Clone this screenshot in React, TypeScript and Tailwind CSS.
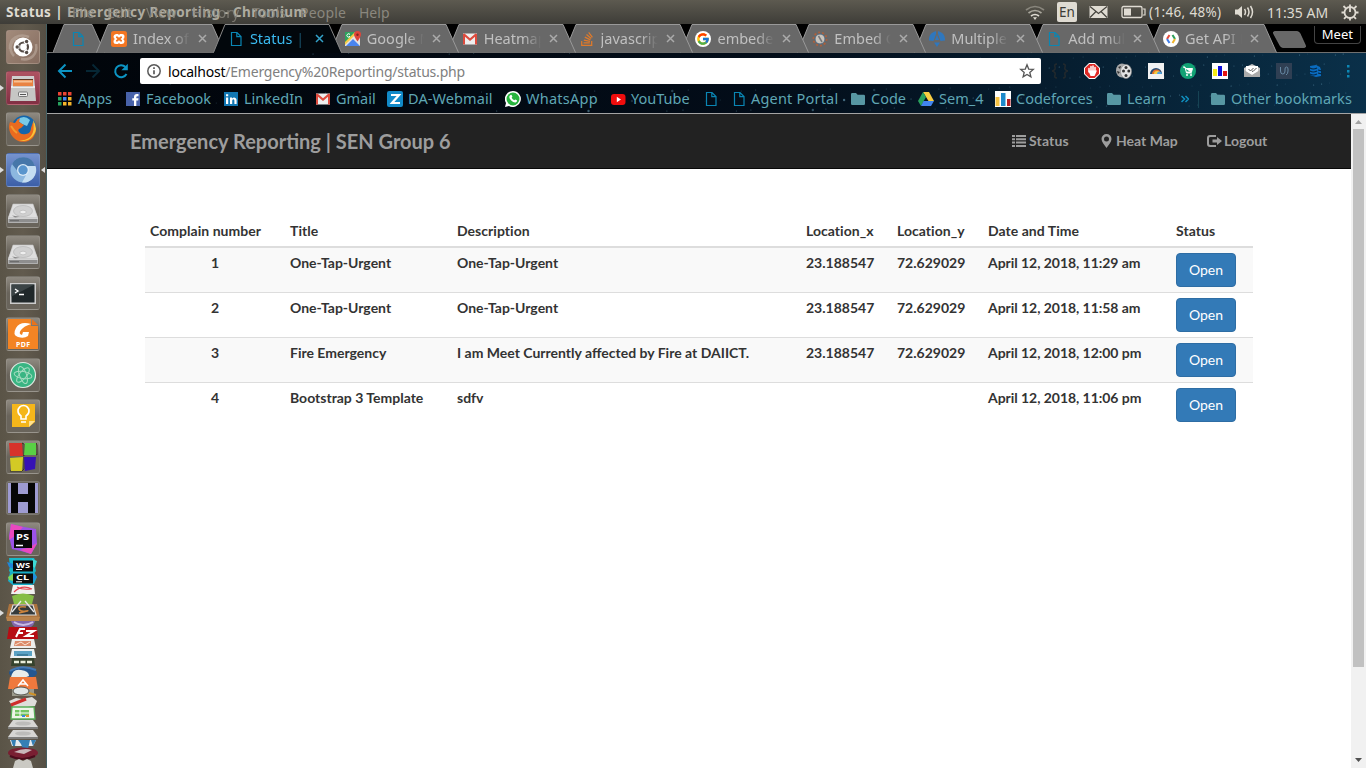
import type { ReactNode } from "react";
import { FaStackOverflow, FaWhatsapp } from "react-icons/fa";
import { FcGoogle } from "react-icons/fc";

/* ---------- small shared icons ---------- */

const Doc = () => (
  <svg className="h-4 w-4 shrink-0" viewBox="0 0 16 16" fill="none" stroke="#0a86b4" strokeWidth="1.200">
    <path d="M3.500 1.500h5.500l4 4v9H3.500zM8.800 1.500v4.200H13" />
  </svg>
);

const Folder = () => (
  <svg className="h-4 w-4 shrink-0" viewBox="0 0 16 16" fill="#5797a3">
    <path d="M1 3.200Q1 2 2.200 2H6l1.600 1.800h6.200q1.200 0 1.200 1.200v7.800q0 1.200-1.200 1.200H2.200Q1 14 1 12.800z" />
  </svg>
);

const Gmail = () => (
  <svg className="h-4 w-4 shrink-0" viewBox="0 0 16 16">
    <path d="M1 2.500h14v11H1z" fill="#eee" />
    <path d="M1 13.500V3l1.500-.5L8 7.300l5.500-4.800L15 3v10.500h-2V5.800L8 10 3 5.800v7.700z" fill="#dd4b3e" />
  </svg>
);

const Codeforces = () => (
  <svg className="h-4 w-4 shrink-0" viewBox="0 0 16 16">
    <path d="M0 0h16v16H0z" fill="#fff" />
    <path d="M0.500 6h4v9h-4z" fill="#f6c343" />
    <path d="M6 2h4.500v13H6z" fill="#1d8acb" />
    <path d="M12 8h3.500v7H12z" fill="#b21f24" />
  </svg>
);

/* ---------- system panel ---------- */

function Panel() {
  return (
    <header className="flex h-6 shrink-0 items-center bg-linear-to-b from-[#5d5a50] to-[#3e3d38] font-['Noto_Sans',sans-serif] text-[14px] text-[#dfdbd2]">
      <div className="relative flex h-6 w-[1025px] items-center pl-[6px]">
        <span className="w-[301px] whitespace-nowrap text-[13.500px] font-bold tracking-[0.420px]">
          Status | <span className="text-[#aeaba0]">Emergency Reporting - Chromium</span>
        </span>
        <div className="absolute left-[72px] top-0 flex h-6 items-center whitespace-nowrap text-[#8a877e]">
          <span className="w-[35px] opacity-80">File</span>
          <span className="w-[39px] opacity-80">Edit</span>
          <span className="w-[46px] opacity-80">View</span>
          <span className="w-[60px] opacity-80">History</span>
          <span className="w-[48px] opacity-80">Tools</span>
          <span className="w-[59px] tracking-[0.200px]">People</span>
          <span>Help</span>
        </div>
      </div>
      <svg className="mr-[12px] h-5 w-5 shrink-0" viewBox="0 0 20 20" fill="none" strokeWidth="1.700">
        <path d="M1 8q9-7 18 0" stroke="#89867d" />
        <path d="M3.500 11q6.500-5 13 0" stroke="#aaa79d" />
        <path d="M6 14q4-3 8 0" stroke="#dfdbd2" />
        <path d="M8 15.300h4L10 18z" fill="#dfdbd2" />
      </svg>
      <span className="flex h-5 w-5 shrink-0 items-center justify-center rounded-[2px] bg-[#dfdbd2] text-[13.500px] text-[#3c3b37]">En</span>
      <svg className="ml-[12px] h-[14px] w-[19px] shrink-0" viewBox="0 0 19 14">
        <path d="M.5 1h18v12H.5z" fill="#dfdbd2" />
        <path d="M1 1.500l8.500 7 8.500-7M1 12.500l6-6m11 6l-6-6" fill="none" stroke="#45433d" strokeWidth="1.200" />
      </svg>
      <svg className="ml-[13px] h-[14px] w-[25px] shrink-0" viewBox="0 0 25 14">
        <rect x="1" y="1.500" width="20" height="11" rx="1.500" fill="none" stroke="#dfdbd2" strokeWidth="1.300" />
        <path d="M3 3.500h7v7H3z" fill="#dfdbd2" />
        <path d="M22 4h2v6h-2" fill="none" stroke="#dfdbd2" strokeWidth="1.200" />
      </svg>
      <span className="ml-[3px] w-[82px] whitespace-nowrap text-[13.500px] tracking-[0.350px]">(1:46, 48%)</span>
      <svg className="ml-[3px] h-4 w-5 shrink-0" viewBox="0 0 20 16" fill="none" stroke="#dfdbd2" strokeWidth="1.500">
        <path d="M1 5.500h3l4-3.500v12l-4-3.500H1z" fill="#dfdbd2" stroke="none" />
        <path d="M10.500 5q2 3 0 6M13.500 3.500q3 4.500 0 9M16.500 2q4 6 0 12" />
      </svg>
      <span className="ml-[13px] w-[74px] whitespace-nowrap text-[14px] tracking-[0.020px]">11:35 AM</span>
      <svg className="h-[18px] w-[18px] shrink-0" viewBox="0 0 18 18" fill="none" stroke="#dfdbd2" strokeWidth="1.800">
        <circle cx="9" cy="9.500" r="5.500" />
        <path d="M9 0v3" stroke="#55524a" strokeWidth="5" />
        <path d="M9 1.500V9M2.500 3l2.300 2.300M15.500 3l-2.300 2.300M.5 9.500H3.500M14.500 9.500h3M3 15.800l2-2M15 15.800l-2-2M9 15v2.500" />
      </svg>
    </header>
  );
}

/* ---------- launcher ---------- */

function Tile({ children, className, left, right }: { children: ReactNode; className?: string; left?: boolean; right?: boolean }) {
  return (
    <div
      className={
        "relative h-[34px] w-[34px] shrink-0 rounded-[3px] border border-white/10 " +
        (className ?? "bg-linear-to-b from-[#8f8a81] via-[#69645b] to-[#69645b]")
      }
    >
      <svg className="h-8 w-8" viewBox="0 0 32 32">
        {children}
      </svg>
      {left && (
        <svg className="absolute -left-[7px] top-[13px] h-[6px] w-[4px]" viewBox="0 0 4 6">
          <path d="M0 0l4 3-4 3z" fill="#ddd" />
        </svg>
      )}
      {right && (
        <svg className="absolute -right-[6px] top-[13px] h-[6px] w-[4px]" viewBox="0 0 4 6">
          <path d="M4 0L0 3l4 3z" fill="#ddd" />
        </svg>
      )}
    </div>
  );
}

const Drive = () => (
  <g>
    <path d="M6 10h20l5 13v4q0 1-1 1H2q-1 0-1-1v-4z" fill="#d2d2d2" />
    <path d="M1.500 24h29v3.500h-29z" fill="#8e8e8e" />
    <path d="M6 9h20l4.500 13.500h-29z" fill="#dedede" stroke="#c5c5c5" strokeWidth=".6" />
    <ellipse cx="16" cy="16" rx="9.500" ry="5.500" fill="#d0d0d0" stroke="#b5b5b5" strokeWidth=".7" />
    <ellipse cx="16" cy="17" rx="3.200" ry="1.800" fill="#eee" stroke="#aaa" strokeWidth=".5" />
    <path d="M5 20.500l8 1.200-5 .7z" fill="#888" />
    <path d="M3 25.700h9" stroke="#666" />
  </g>
);

function StackedApps() {
  return (
    <svg className="h-[210px] w-[36px] shrink-0" viewBox="0 0 36 210">
      <path d="M4 0h25l2 4-1 5 1 4-3 4H8l-4-4 1-5z" fill="#18b8c8" />
      <path d="M2 4l7 2v5l-5-2z" fill="#2086d8" />
      <path d="M27 1l5 2-2 7-3-2z" fill="#3ddbd5" />
      <path d="M5 14h24l3 5-3 7-5 2H9l-6-5z" fill="#18adc8" />
      <path d="M3 19l6-4v8l-5-1z" fill="#7ed65a" />
      <path d="M27 15l5 4-5 5z" fill="#238be0" />
      <path d="M8 2.500h20v11H8zM8 15.500h20v10H8z" fill="#0b0b0b" />
      <text x="11" y="9.500" textLength="14" lengthAdjust="spacingAndGlyphs" fontSize="7" fontWeight="700" fontFamily="Noto Sans" fill="#fff">WS</text>
      <text x="11" y="21.500" textLength="13" lengthAdjust="spacingAndGlyphs" fontSize="7" fontWeight="700" fontFamily="Noto Sans" fill="#fff">CL</text>
      <path d="M11 11.500h6M11 23.800h6" stroke="#fff" />
      <path d="M8 27h21l1 9H6z" fill="#f0f0ee" />
      <path d="M9 34q8-8 18-3M12 29q5 3 14 2" fill="none" stroke="#e34450" strokeWidth="1.100" />
      <path d="M7 38q11-5 22 0l-2 8H9z" fill="#85bd45" />
      <path d="M4 46h28l3 14H1z" fill="#ac743e" />
      <path d="M8 47h20l3 10H5z" fill="#353a3b" stroke="#dedede" strokeWidth="1.200" />
      <path d="M16 43l-9 11M20 43l9 11" fill="none" stroke="#e8e8e8" strokeWidth="1.300" />
      <path d="M21 49q-8-1-7 2t7 2-7 2" fill="none" stroke="#cc843c" strokeWidth="1.500" />
      <path d="M1 59h34l-1 4H2z" fill="#b9834c" />
      <path d="M6 63h24q-2 8-12 8T6 63z" fill="#8166ac" />
      <path d="M9 64q9 6 19 0" fill="none" stroke="#c9bbe4" strokeWidth="2" />
      <path d="M4 69h28l1 12H2z" fill="#b70d14" />
      <path d="M11 79l4-8h5M12 75h6M21 73h8l-8 5h8" fill="none" stroke="#fff" strokeWidth="2" />
      <path d="M7 81h22l2 9H5z" fill="#ededeb" />
      <path d="M10 83h16v5H9z" fill="#dc8b69" />
      <path d="M10 87l6-3 4 3 5-3" fill="none" stroke="#f9e4d4" />
      <path d="M7 91h22l2 9H5z" fill="#edf2f3" />
      <path d="M9 93h18v5H9z" fill="#5aa2c4" />
      <path d="M12 97h11" stroke="#245e78" />
      <path d="M7 100h22l1 8H6z" fill="#36432d" />
      <path d="M9 104h18" stroke="#e9edda" strokeWidth="2.500" strokeDasharray="5 1.500" />
      <ellipse cx="18" cy="115" rx="14" ry="5.500" fill="#245791" />
      <path d="M6 119q2-9 10-7 8 1 8 6l-8 3z" fill="#e8ecec" />
      <path d="M5 113q12-7 26-1" fill="none" stroke="#4379b5" strokeWidth="2" />
      <path d="M5 119h26l2 12H3z" fill="#ef793d" />
      <path d="M13 128l5-6 5 6M15 126h6" fill="none" stroke="#fff" strokeWidth="1.500" />
      <path d="M7 131h22v7H7z" fill="#9b9a8b" />
      <ellipse cx="16" cy="133" rx="8" ry="4" fill="#e1e7e6" stroke="#55544c" />
      <path d="M24 135l7 2" stroke="#cf9229" strokeWidth="2" />
      <path d="M4 143l7-3 6 1 10-2 5 4-2 5-7 1H8z" fill="#dededa" />
      <path d="M6 147l15-6" stroke="#cf2d2c" strokeWidth="3" />
      <path d="M7 149h22l1 12H6z" fill="#eef4e9" stroke="#58ae58" strokeWidth="1.300" />
      <path d="M10 152h14v6H10z" fill="#73c562" />
      <path d="M10 155h14M15 152v6" stroke="#fff" />
      <path d="M17 157h3v2h-3z" fill="#3a85dd" /><path d="M21 157h3v2h-3z" fill="#e5942b" />
      {[162, 172].map((y) => (
        <g key={y}>
          <path d={`M8 ${y}h20l5 7v2H3v-2z`} fill="#d6d6d4" />
          <path d={`M3 ${y + 7}h30v2H3z`} fill="#7d7d7b" />
          <ellipse cx="18" cy={y + 3.500} rx="8" ry="2" fill="#bcbcba" />
        </g>
      ))}
      <path d="M5 182h26l-3 6H7z" fill="#e6eaed" />
      <path d="M6 182h5l-1 6H8zM13 182h12l-2 9h-5l-2-5zM26 182h5l-3 6z" fill="#347fb4" />
      <ellipse cx="18" cy="195" rx="15" ry="5.500" fill="#791f32" />
      <path d="M9 194q10-5 18-2l-8 4z" fill="#c9b7ba" />
      <path d="M5 198q12 6 25 0" stroke="#4c0c1c" strokeWidth="2" fill="none" />
      <path d="M10 203l4-2 4 2 4-2 4 2 2 7H8z" fill="#cac9c3" />
    </svg>
  );
}

function Launcher() {
  return (
    <aside className="flex w-[47px] shrink-0 flex-col items-center gap-[7px] overflow-hidden border-r border-[#456064] bg-linear-to-r from-[#5a5447] via-[#625b4e] to-[#554f44] pr-px pt-[6px]">
      <Tile className="bg-linear-to-br from-[#a28b7b] to-[#866d60]">
        <path d="M3 18C2 7 12 2 22 6M29 13c2 10-5 17-15 15M7 25C0 18 5 8 11 6" fill="none" stroke="#b7a497" strokeWidth="2.500" opacity=".7" />
        <circle cx="16" cy="16" r="9.500" fill="#fff" />
        <circle cx="16.500" cy="16" r="4.500" fill="none" stroke="#534a45" strokeWidth="2.200" />
        <path d="M12.500 16H9M18.200 13L20.500 9M18.200 19L20.500 23" stroke="#fff" strokeWidth="3.600" />
        <circle cx="10.200" cy="16" r="1.700" fill="#534a45" />
        <circle cx="19.600" cy="10.500" r="1.700" fill="#534a45" />
        <circle cx="19.600" cy="21.500" r="1.700" fill="#534a45" />
      </Tile>
      <Tile left className="bg-linear-to-b from-[#ae5362] to-[#812f43]">
        <path d="M5 4h22l1 11H4z" fill="#cfcfcf" />
        <path d="M6 7h20v8H6z" fill="#5d3823" />
        <path d="M6 8h20v6H6z" fill="#e98342" />
        <path d="M7 9.500h18" stroke="#f7c092" strokeWidth="2" />
        <path d="M4 15h24l1 14H3z" fill="#c6c6c4" />
        <path d="M4 15h24" stroke="#f8f8f8" strokeWidth="1.500" />
        <rect x="11.500" y="20" width="9" height="4.500" rx="1" fill="#eee" stroke="#777" />
        <path d="M13 22.500h6" stroke="#555" />
      </Tile>
      <Tile>
        <circle cx="17" cy="14.500" r="12" fill="#1565aa" />
        <path d="M10 7q7-6 13 0l-3 6-5-2z" fill="#79cae8" />
        <path d="M3 9l5 1q2-4 5-5l-1 4 5 3-3 3q-4 1-2 4t7 2c3 0 5-3 5-6l2-6q5 8 1 14c-3 6-13 8-19 3S1 14 3 9z" fill="#ea6b1f" />
        <path d="M26 7q6 9 0 16t-14 4q8 1 12-4t2-16z" fill="#f9c338" />
        <path d="M4 13q3 5 6 7" stroke="#f49b2f" strokeWidth="2" fill="none" />
      </Tile>
      <Tile left right className="bg-linear-to-b from-[#7693ce] to-[#3c5fa8]">
        <circle cx="16" cy="16" r="12.500" fill="#8cb7df" />
        <path d="M5 10A12.500 12.500 0 0 1 28 12H16l-4 7z" fill="#4777a9" />
        <path d="M28.500 12A12.500 12.500 0 0 1 15 28.500l5.500-10L20 12z" fill="#c5def2" />
        <circle cx="16" cy="16" r="6" fill="#dbeaf7" />
        <circle cx="16" cy="16" r="4.700" fill="#5995cd" />
      </Tile>
      <Tile><Drive /></Tile>
      <Tile><Drive /></Tile>
      <Tile>
        <path d="M3 6h26v21H3z" fill="#ccc" />
        <path d="M4.500 7.500h23v18h-23z" fill="#20282a" />
        <path d="M4.500 7.500h23l-23 12z" fill="#3b4446" />
        <path d="M8 12l3 2-3 2M12 17.500h5" stroke="#fff" fill="none" strokeWidth="1.300" />
      </Tile>
      <Tile>
        <path d="M1 1h23v7h7v23H1z" fill="#f38424" />
        <path d="M25 1l6 6h-6z" fill="#e9721b" />
        <path d="M24 6q-11-3-15 4t2 9 10-1l1-4h-6l-1 3q-4-1-1-5t10-6z" fill="#fff" />
        <text x="9" y="29" textLength="14" fontSize="7" fontWeight="700" fontFamily="Noto Sans" fill="#fff">PDF</text>
      </Tile>
      <Tile>
        <circle cx="16" cy="16" r="12.500" fill="#39b583" stroke="#dfeae3" strokeWidth="1.200" />
        <g fill="none" stroke="#a5dcc0" strokeWidth="1">
          <ellipse cx="16" cy="16" rx="3.500" ry="9" transform="rotate(-20 16 16)" />
          <ellipse cx="16" cy="16" rx="3.500" ry="9" transform="rotate(40 16 16)" />
          <ellipse cx="16" cy="16" rx="3.500" ry="9" transform="rotate(100 16 16)" />
        </g>
      </Tile>
      <Tile>
        <path d="M5 4h23v18l-6 5H5z" fill="#f4b61b" />
        <path d="M28 21l-6 6v-6z" fill="#ffe190" />
        <path d="M14 19v-3q-3-2-3-5a5.500 5.500 0 0 1 11 0q0 3-3 5v3zM14 22h5" fill="none" stroke="#fff" strokeWidth="1.600" />
      </Tile>
      <Tile>
        <path d="M15 2l2 1v12l-2-1zM29 2l1 2v10l-2-1zM3 30h12l2-2v-12" fill="none" stroke="#38351c" />
        <path d="M2 2h13l1 13H3z" fill="#d7322b" />
        <path d="M18 2h11v12H17z" fill="#59cf45" />
        <path d="M3 17l13-1-1 14H4z" fill="#d3ca25" />
        <path d="M17 16h12l-1 12-10 2z" fill="#3612b5" />
      </Tile>
      <Tile className="bg-[#6d6962]">
        <path d="M1 1h30v30H1z" fill="#9e9bd1" />
        <path d="M4 1h7v11h10V1h7v30h-7V20H11v11H4z" fill="#070707" />
      </Tile>
      <Tile>
        <path d="M4 1l13 3 12 2 1 15-6 10-10-3-9-2L2 13z" fill="#9c52e8" />
        <path d="M4 1l12 3-8 9-6 4zM23 24l7-4-6 11-11-4z" fill="#ea49bd" />
        <path d="M7 7h18v18H7z" fill="#080808" />
        <text x="9" y="16.500" fontSize="9.500" textLength="13" lengthAdjust="spacingAndGlyphs" fontWeight="700" fontFamily="Noto Sans" fill="#fff">PS</text>
        <path d="M9 22.500h7" stroke="#fff" strokeWidth="1.500" />
      </Tile>
      <div className="relative -mt-[5px] flex">
        <StackedApps />
        <svg className="absolute -left-[5px] top-[52px] h-[6px] w-[4px]" viewBox="0 0 4 6">
          <path d="M0 0l4 3-4 3z" fill="#ddd" />
        </svg>
      </div>
    </aside>
  );
}

/* ---------- tab strip ---------- */

const tabs: { title: string; active?: boolean; icon: ReactNode }[] = [
  {
    title: "Index of /",
    icon: (
      <svg className="h-4 w-4" viewBox="0 0 16 16">
        <rect width="16" height="16" rx="2.500" fill="#f37623" />
        <path d="M5 3h2l1 1 1-1h2q2.500 0 2.500 2.500T12 8q1.500.5 1.500 2.500T11 13H9l-1-1-1 1H5q-2.500 0-2.500-2.500T4 8Q2.500 7.500 2.500 5.500T5 3z" fill="#fff" />
        <path d="M5 5.500h1.500l1.500 1.300 1.500-1.300H11v1.200L9.500 8l1.500 1.300v1.200H9.500L8 9.200l-1.500 1.300H5V9.300L6.500 8 5 6.700z" fill="#f37623" />
      </svg>
    ),
  },
  { title: "Status | Emergency", active: true, icon: <Doc /> },
  {
    title: "Google Maps",
    icon: (
      <svg className="h-4 w-4" viewBox="0 0 16 16">
        <path d="M0 1h15v14H0z" fill="#e4e4e4" />
        <path d="M0 1h11L0 12z" fill="#2da35e" />
        <path d="M1 15l7-7 7 7z" fill="#4a85ef" />
        <path d="M0 11L10 1h3L0 14z" fill="#f7cc46" />
        <path d="M12.500 0a3.500 3.500 0 0 1 3.500 3.500q0 2-3.500 7Q9 5.500 9 3.500A3.500 3.500 0 0 1 12.500 0z" fill="#df453a" />
        <circle cx="12.500" cy="3.700" r="1.200" fill="#7d2a22" />
        <path d="M5 3.500a1.700 1.700 0 1 0 0 2H3.800" fill="none" stroke="#fff" />
      </svg>
    ),
  },
  { title: "Heatmap.js", icon: <Gmail /> },
  { title: "javascript - Go", icon: <FaStackOverflow className="h-4 w-4 text-[#e07a2a]" /> },
  {
    title: "embeded map",
    icon: (
      <span className="flex h-4 w-4 items-center justify-center rounded-full bg-white">
        <FcGoogle className="h-3.5 w-3.5" />
      </span>
    ),
  },
  {
    title: "Embed Google",
    icon: (
      <svg className="h-4 w-4" viewBox="0 0 16 16">
        <circle cx="8" cy="8" r="6.500" fill="none" stroke="#a9603e" strokeWidth="2" strokeDasharray="2 2" />
        <circle cx="8" cy="8" r="5" fill="#c9c4bd" stroke="#526b82" />
        <path d="M6.500 5l3.500 6" stroke="#777" strokeWidth="1.500" />
      </svg>
    ),
  },
  {
    title: "Multiple markers",
    icon: (
      <svg className="h-4 w-4" viewBox="0 0 16 16" fill="#2f77bd">
        <path d="M7 0v3L4.500 10 0 9.500Q-.5 2 7 0zM9 0v3l2.500 7 4.500-.5Q16.500 2 9 0z" />
        <path d="M8 4l2 5H6zM5 11.500h6L8 16z" />
      </svg>
    ),
  },
  { title: "Add multiple", icon: <Doc /> },
  {
    title: "Get API Key",
    icon: (
      <svg className="h-4 w-4" viewBox="0 0 16 16" fill="none" strokeWidth="2">
        <circle cx="8" cy="8" r="8" fill="#fff" />
        <path d="M6.500 4L4 8" stroke="#e34b3c" />
        <path d="M4 8l2.500 4" stroke="#3f7de8" />
        <path d="M9.500 4L12 8" stroke="#2b9e5a" />
        <path d="M12 8l-2.500 4" stroke="#f1b52b" />
      </svg>
    ),
  },
];

const tabLayers = ["z-20", "z-30", "z-[18]", "z-[17]", "z-[16]", "z-[15]", "z-[14]", "z-[13]", "z-[12]", "z-[11]"];

function TabStrip() {
  return (
    <div className="flex h-[29px] shrink-0 border-b border-[#707070] bg-black pl-[6px]">
      <div className="relative z-20 flex w-[43px] shrink-0">
        <svg className="absolute left-0 top-0 h-[29px] w-[52px]" viewBox="0 0 52 29">
          <path d="M0 28.500L11 .5h28L51.500 28.500" fill="#686868" stroke="#949494" />
        </svg>
        <span className="relative ml-[17px] mt-[7px]"><Doc /></span>
      </div>
      {tabs.map((tab, i) => (
        <div key={tab.title} className={"relative flex h-[29px] w-[116.900px] shrink-0 " + tabLayers[i]}>
          <svg className="absolute left-0 top-0 h-[29px] w-[129px]" viewBox="0 0 129 29">
            <path
              d="M.5 28.500L12 .5h104L128.500 28.500"
              fill={tab.active ? "#02070c" : "#686868"}
              stroke={tab.active ? "#888" : "#999"}
            />
            {tab.active && <path d="M1 28.500h127" stroke="#02070c" />}
          </svg>
          <div className="relative flex h-[29px] items-center pl-[15px]">
            <span className="flex h-4 w-4 shrink-0">{tab.icon}</span>
            <span
              className={
                "ml-[6px] w-[57px] overflow-hidden whitespace-nowrap mask-r-from-70% font-['Noto_Sans',sans-serif] text-[14.500px] " +
                (tab.active ? "text-[#3ab9ef]" : "text-[#c0c0c0]")
              }
            >
              {tab.title}
            </span>
            <svg className="ml-[8px] h-[9px] w-[9px]" viewBox="0 0 9 9" stroke={tab.active ? "#34a2ca" : "#aaa"} strokeWidth="1.500">
              <path d="M1 1l7 7M8 1L1 8" />
            </svg>
          </div>
        </div>
      ))}
      <svg className="ml-[7px] mt-[7px] h-[17px] w-[36px] shrink-0" viewBox="0 0 36 17">
        <path d="M2.500.5H25q2 0 3 2l5.500 12q.5 2-1 2H11q-2 0-3-2L1.500 2.500Q1 .5 2.500.5z" fill="#686868" stroke="#888" strokeWidth=".6" />
      </svg>
      <span className="ml-[6px] mt-[2px] flex h-[18px] w-[47px] items-center justify-center rounded-b-[4px] border border-t-0 border-[#444] pt-px font-['Noto_Sans',sans-serif] text-[13px] text-white">
        Meet
      </span>
    </div>
  );
}

/* ---------- toolbar and bookmarks ---------- */

const extensions: ReactNode[] = [
  <path d="M5 1Q2 1 3 4t-3 4q4 1 3 4t2 3M11 1q3 0 2 3t3 4q-4 1-3 4t-2 3" fill="none" stroke="#22292d" strokeWidth="1.500" />,
  <g>
    <path d="M5 0h6l5 5v6l-5 5H5l-5-5V5z" fill="#fff" />
    <path d="M5.300 1h5.400L15 5.300v5.400L10.700 15H5.300L1 10.700V5.300z" fill="#df2824" />
    <path d="M5 9V5.500M7 8V3.500M9 8V3M11 8V4.500" stroke="#fff" strokeWidth="1.500" strokeLinecap="round" />
    <path d="M4.300 7.500h7.500L13 7.500 10.500 13H6.500z" fill="#fff" />
  </g>,
  <g>
    <ellipse cx="6" cy="7.500" rx="6" ry="7" fill="#aaa" />
    <ellipse cx="10" cy="8.500" rx="5.500" ry="7" fill="#e4e4e4" stroke="#888" strokeWidth=".7" />
    <g fill="#333">
      <circle cx="10" cy="4.500" r="1.500" />
      <circle cx="7.500" cy="8" r="1.500" />
      <circle cx="12.800" cy="8" r="1.500" />
      <circle cx="10" cy="12.500" r="1.500" />
      <path d="M2 4l3-1-1 3zM1 8l3 1-2 2z" />
    </g>
  </g>,
  <g>
    <path d="M0 0h16v16H0z" fill="#f2f2f2" />
    <path d="M2 11a6 6 0 0 1 12 0" fill="#264b76" />
    <path d="M4 11a4.500 4.500 0 0 1 9 0" fill="#e7742a" />
    <path d="M6 11a3 3 0 0 1 6 0" fill="#f6cd42" />
    <path d="M9 11a2 2 0 0 1 5 0" fill="#51a5df" />
  </g>,
  <g>
    <circle cx="8" cy="8" r="8" fill="#12a275" />
    <path d="M3 4h2l1.500 6H12M5.500 5.500h7L11.500 9h-5" fill="#fff" stroke="#fff" />
    <circle cx="7" cy="12" r="1" fill="#fff" />
    <circle cx="11" cy="12" r="1" fill="#fff" />
  </g>,
  <g>
    <path d="M0 0h16v16H0z" fill="#fff" />
    <path d="M1 6h4v7H1z" fill="#f6ec16" />
    <path d="M6 3h4v10H6z" fill="#0b0cd8" />
    <path d="M11 8h4v5h-4z" fill="#e51414" />
  </g>,
  <g>
    <path d="M0 5l8-4 8 4v9H0z" fill="#c7c7c7" />
    <path d="M2 3h12v6l-6 3-6-3z" fill="#fff" />
    <path d="M0 7l8 5 8-5v7H0z" fill="#ababab" />
    <path d="M4.500 6l2 2 3-3M8 8l1 .5 3.500-3.500" fill="none" stroke="#555" />
  </g>,
  <g>
    <path d="M0 0h16v16H0z" fill="#2f3f53" />
    <path d="M4.500 4v4q0 3 2.300 3T9 8V6q0-2 1.500-2T12 6v2q0 3-2 4" fill="none" stroke="#6688a3" />
  </g>,
  <g>
    <path d="M2 3l6-1 4 2 1 3v6l-5 1-6-2z" fill="#0a6cc0" />
    <path d="M2 5q3 2 7 0M2 8q3 2 7 0M2 11q3 2 7 0M10 7l4 1M10 10l4 1" fill="none" stroke="#042643" strokeWidth="1.200" />
  </g>,
];

function Toolbar() {
  return (
    <div className="flex h-[36px] shrink-0 items-center pl-[10px]">
      <svg className="h-4 w-4" viewBox="0 0 16 16" fill="none" stroke="#0c94c3" strokeWidth="2">
        <path d="M15 8H2M8.500 1.500L2 8l6.500 6.500" />
      </svg>
      <svg className="ml-[12px] h-4 w-4" viewBox="0 0 16 16" fill="none" stroke="#062735" strokeWidth="2">
        <path d="M1 8h13M7.500 1.500L14 8l-6.500 6.500" />
      </svg>
      <svg className="ml-[12px] h-4 w-4" viewBox="0 0 16 16" fill="none" stroke="#0c94c3" strokeWidth="2">
        <path d="M13.500 11A6 6 0 1 1 12.500 4" />
        <path d="M14.800.8v6.400H8.400z" fill="#0c94c3" stroke="none" />
      </svg>
      <div className="ml-[11px] flex h-[26px] w-[901px] items-center rounded-[2px] bg-white font-['Noto_Sans',sans-serif] text-[14px] text-[#808080]">
        <svg className="ml-[6px] h-4 w-4" viewBox="0 0 16 16" fill="none" stroke="#5a5a5a" strokeWidth="1.500">
          <circle cx="8" cy="8" r="6.200" />
          <path d="M8 7.300v4M8 4.300v1.600" strokeWidth="1.700" />
        </svg>
        <span className="ml-[6px] w-[851px] whitespace-nowrap tracking-[-0.210px]">
          <span className="text-black">localhost</span>/Emergency%20Reporting/status.php
        </span>
        <svg className="h-4 w-4 shrink-0" viewBox="0 0 16 16" fill="none" stroke="#555" strokeWidth="1.300">
          <path d="M8 1.800l1.700 4.300 4.600.3-3.500 3 1.100 4.500L8 11.400l-3.900 2.500 1.100-4.500-3.500-3 4.600-.3z" />
        </svg>
      </div>
      <div className="ml-[11px] flex gap-4">
        {extensions.map((drawing, i) => (
          <svg key={i} className="h-4 w-4 shrink-0" viewBox="0 0 16 16">{drawing}</svg>
        ))}
        <svg className="h-4 w-4 shrink-0" viewBox="0 0 16 16" fill="#0c88b5">
          <path d="M7 2h2.500v2.500H7zM7 7h2.500v2.500H7zM7 12h2.500v2.500H7z" />
        </svg>
      </div>
    </div>
  );
}

const bookmarks: { label: string; box: string; icon: ReactNode }[] = [
  {
    label: "Apps",
    box: "w-[68px] gap-[4px]",
    icon: (
      <svg className="h-4 w-4 shrink-0" viewBox="0 0 16 16">
        <path d="M0 1h3.500v3.500H0zM5 1h3.500v3.500H5zM10 1h3.500v3.500H10z" fill="#ec4434" />
        <path d="M0 6h3.500v3.500H0zM0 11h3.500v3.500H0z" fill="#28a35f" />
        <path d="M5 6h3.500v3.500H5z" fill="#4486ef" />
        <path d="M10 6h3.500v3.500H10zM5 11h3.500v3.500H5zM10 11h3.500v3.500H10z" fill="#f5b52b" />
      </svg>
    ),
  },
  {
    label: "Facebook",
    box: "w-[98px] gap-[4px]",
    icon: (
      <svg className="h-4 w-4 shrink-0" viewBox="0 0 16 16">
        <path d="M0 1h14v14H0z" fill="#4862a9" />
        <path d="M8 15V9.500H6.300V7.300H8V6q0-3 3-3h1.500v2.200h-1.200q-1 0-1 1v1.100h2.200l-.3 2.200h-1.900V15z" fill="#fff" />
      </svg>
    ),
  },
  {
    label: "LinkedIn",
    box: "w-[91px] gap-[4px]",
    icon: (
      <svg className="h-4 w-4 shrink-0" viewBox="0 0 16 16">
        <path d="M0 1h14v14H0z" fill="#1277b3" />
        <path d="M2 6.500h2.200V13H2zM2 3.200h2.200v2H2zM6 6.500h2v1q2-2 4 0 .6.700.6 2V13h-2.200V9.800q0-1.500-1-1.500-1.200 0-1.200 1.500V13H6z" fill="#fff" />
      </svg>
    ),
  },
  { label: "Gmail", box: "w-[72px] gap-[5px]", icon: <Gmail /> },
  {
    label: "DA-Webmail",
    box: "w-[118px] gap-[5px] tracking-[0.100px]",
    icon: (
      <svg className="h-4 w-4 shrink-0" viewBox="0 0 16 16">
        <rect width="16" height="16" rx="2" fill="#118ac9" />
        <path d="M4 4h8L5 12h8" fill="none" stroke="#fff" strokeWidth="2.200" />
      </svg>
    ),
  },
  {
    label: "WhatsApp",
    box: "w-[106px] gap-[5px] tracking-[0.250px]",
    icon: (
      <svg className="h-4 w-4 shrink-0" viewBox="0 0 16 16">
        <path d="M8 0a8 8 0 1 1-4 15L0 16l1-4A8 8 0 0 1 8 0z" fill="#fff" />
        <circle cx="8" cy="8" r="6.500" fill="#27b43e" />
        <path d="M5.200 4.200q1.200-1 1.800.5l.4 1.100-.8 1q1 1.800 2.700 2.500l.9-.9 1.800.9q.3 1.800-1.500 2.100-2.200.2-4.300-1.900T4.300 6q0-1.200.9-1.800z" fill="#fff" />
      </svg>
    ),
  },
  {
    label: "YouTube",
    box: "w-[92px] gap-[4px]",
    icon: (
      <svg className="h-4 w-4 shrink-0" viewBox="0 0 16 16">
        <rect y="3" width="14.500" height="11" rx="3" fill="#f00d0d" />
        <path d="M5.800 5.800v5.400l4.200-2.700z" fill="#fff" />
      </svg>
    ),
  },
  { label: "", box: "w-[28px]", icon: <Doc /> },
  { label: "Agent Portal", box: "w-[119px] gap-[4px] tracking-[0.200px]", icon: <Doc /> },
  { label: "Code", box: "w-[68px] gap-[5px]", icon: <Folder /> },
  {
    label: "Sem_4",
    box: "w-[77px] gap-[5px]",
    icon: (
      <svg className="h-4 w-4 shrink-0" viewBox="0 0 16 16">
        <path d="M5 1h6l5 9h-5.500z" fill="#f8cd42" />
        <path d="M5 1l3 5-5 9-3-5z" fill="#29a15e" />
        <path d="M5.500 10H16l-3 5H3z" fill="#4285ef" />
      </svg>
    ),
  },
  { label: "Codeforces", box: "w-[111px] gap-[5px]", icon: <Codeforces /> },
  { label: "Learn", box: "w-[75px] gap-[5px]", icon: <Folder /> },
];

function Bookmarks() {
  return (
    <nav className="flex h-[20px] shrink-0 items-center whitespace-nowrap pl-[11px] font-['Noto_Sans',sans-serif] text-[14.500px] text-[#5fa6b4]">
      {bookmarks.map((b, i) => (
        <span key={i} className={"flex shrink-0 items-center " + b.box}>
          {b.icon}
          {b.label && <span>{b.label}</span>}
        </span>
      ))}
      <svg className="h-2 w-2 shrink-0" viewBox="0 0 8 8" fill="none" stroke="#1090c0" strokeWidth="1.500">
        <path d="M.5 1l3 3-3 3M4.500 1l3 3-3 3" />
      </svg>
      <span className="ml-[9px] mr-[11px] h-[17px] w-px bg-[#164354]" />
      <span className="flex items-center gap-[5px]">
        <Folder />
        <span className="tracking-[0.060px]">Other bookmarks</span>
      </span>
    </nav>
  );
}

const stars = Array.from({ length: 230 }, (_, i) => ({
  x: 1304 * Math.sqrt(((i * 7919) % 1009) / 1009),
  y: (i * 3571) % 59,
  r: i % 13 === 0 ? 1.200 : 0.600,
  o: 0.150 + ((i * 31) % 10) / 25,
}));

function BrowserHead() {
  return (
    <div className="relative flex h-[61px] shrink-0 flex-col border-b border-[#a4a4a4] bg-linear-to-r from-[#01050a] via-[#030d19] via-55% to-[#0a3049]">
      <svg className="absolute left-0 top-0 h-[60px] w-full" viewBox="0 0 1319 60" preserveAspectRatio="none">
        {stars.map((s, i) => (
          <circle key={i} cx={s.x} cy={s.y} r={s.r} fill="#7dbad4" opacity={s.o} />
        ))}
      </svg>
      <div className="relative flex flex-col">
        <Toolbar />
        <Bookmarks />
      </div>
    </div>
  );
}

/* ---------- page ---------- */

const rows = [
  ["1", "One-Tap-Urgent", "One-Tap-Urgent", "23.188547", "72.629029", "April 12, 2018, 11:29 am"],
  ["2", "One-Tap-Urgent", "One-Tap-Urgent", "23.188547", "72.629029", "April 12, 2018, 11:58 am"],
  ["3", "Fire Emergency", "I am Meet Currently affected by Fire at DAIICT.", "23.188547", "72.629029", "April 12, 2018, 12:00 pm"],
  ["4", "Bootstrap 3 Template", "sdfv", "", "", "April 12, 2018, 11:06 pm"],
];

function Page() {
  return (
    <div className="flex min-h-0 flex-1 font-['Lato',sans-serif] text-[14px] leading-5 text-[#333]">
      <main className="flex-1 bg-white">
        <nav className="flex h-[55px] items-center border-b border-[#080808] bg-[#222] pl-[83px] font-bold text-[#9d9d9d]">
          <span className="w-[882px] text-[20px]">Emergency Reporting | SEN Group 6</span>
          <span className="flex w-[88px] items-center gap-[3px]">
            <svg className="h-[14px] w-[14px]" viewBox="0 0 14 14" fill="#9d9d9d">
              <path d="M0 1h3v2H0zM4 1h10v2H4zM0 4.300h3v2H0zM4 4.300h10v2H4zM0 7.600h3v2H0zM4 7.600h10v2H4zM0 11h3v2H0zM4 11h10v2H4z" />
            </svg>
            <span className="tracking-[0.150px]">Status</span>
          </span>
          <span className="flex w-[107px] items-center gap-[2px]">
            <svg className="h-[14px] w-[14px]" viewBox="0 0 14 14" fill="#9d9d9d">
              <path fillRule="evenodd" d="M6.500 0a5 5 0 0 1 5 5c0 3-3 6-5 9-2-3-5-6-5-9a5 5 0 0 1 5-5zm0 2.500a2.500 2.500 0 1 0 0 5 2.500 2.500 0 0 0 0-5z" />
            </svg>
            Heat Map
          </span>
          <span className="flex items-center gap-[2px]">
            <svg className="h-[14px] w-[15px]" viewBox="0 0 15 14" fill="#9d9d9d">
              <path d="M9 1v2H3.500Q2 3 2 4.300v5.400Q2 11 3.500 11H9v2H3q-3 0-3-3V4q0-3 3-3zM10 3l5 4-5 4V8.500H5.500v-3H10z" />
            </svg>
            Logout
          </span>
        </nav>
        <table className="ml-[98px] mt-[47px] w-[1108px] table-fixed border-collapse font-bold">
          <colgroup>
            <col className="w-[140px]" />
            <col className="w-[167px]" />
            <col className="w-[349px]" />
            <col className="w-[91px]" />
            <col className="w-[91px]" />
            <col className="w-[188px]" />
            <col className="w-[82px]" />
          </colgroup>
          <thead>
            <tr className="border-b-2 border-[#ddd] text-left">
              {["Complain number", "Title", "Description", "Location_x", "Location_y", "Date and Time", "Status"].map((h) => (
                <th key={h} className="p-[5px] tracking-[0.040px]">{h}</th>
              ))}
            </tr>
          </thead>
          <tbody>
            {rows.map((row) => (
              <tr key={row[0]} className="border-t border-[#ddd] align-top first:border-t-2 odd:bg-[#f9f9f9]">
                {row.map((cell, i) => (
                  <td key={i} className={i === 5 ? "p-[5px] tracking-[-0.050px]" : "p-[5px] first:text-center"}>{cell}</td>
                ))}
                <td className="p-[5px]">
                  <button className="block h-[34px] w-[60px] rounded-[4px] border border-[#2e6da4] bg-[#337ab7] font-normal text-white">Open</button>
                </td>
              </tr>
            ))}
          </tbody>
        </table>
      </main>
      <div className="flex w-[15px] shrink-0 flex-col items-center bg-[#f1f1f1]">
        <svg className="h-[15px] w-[15px] shrink-0" viewBox="0 0 15 15"><path d="M7.500 6l3.500 4H4z" fill="#a3a3a3" /></svg>
        <div className="h-[538px] w-[11px] bg-[#c1c1c1]" />
        <svg className="mt-auto h-[15px] w-[15px] shrink-0" viewBox="0 0 15 15"><path d="M4 5h7l-3.500 4z" fill="#505050" /></svg>
      </div>
    </div>
  );
}

export default function App() {
  return (
    <div className="flex h-[768px] w-[1366px] flex-col overflow-hidden">
      <Panel />
      <div className="flex min-h-0 flex-1">
        <Launcher />
        <div className="flex min-w-0 flex-1 flex-col">
          <TabStrip />
          <BrowserHead />
          <Page />
        </div>
      </div>
    </div>
  );
}
